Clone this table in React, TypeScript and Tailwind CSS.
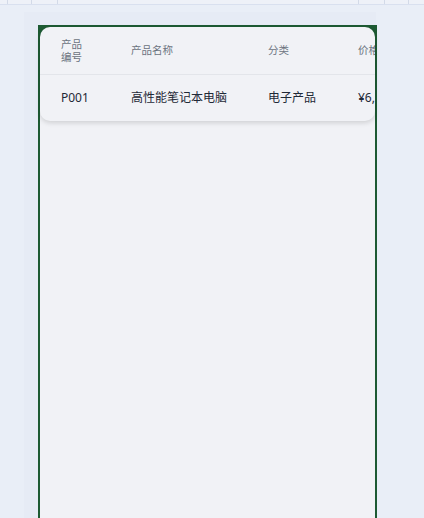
import React from "react";

const ticks = [7, 31, 57, 358, 384, 408];

export default function App() {
  return (
    <div
      className="w-[424px] h-[518px] overflow-hidden bg-[#e9eef7] flex flex-col"
      style={{ fontFamily: '"Noto Sans", "Noto Sans CJK SC", sans-serif' }}
    >
      <div className="relative h-[5px] shrink-0 bg-[#eef1f8] border-b border-[#d9e0ef]">
        {ticks.map((x) => (
          <div key={x} className="absolute top-0 h-[4px] w-px bg-[#d3dae8]" style={{ left: x }} />
        ))}
      </div>
      <div className="ml-[24px] mt-[7px] w-[352px] flex-1 bg-[#e6ebf5]">
        <div className="ml-[14px] mt-[13px] w-[339px] h-[500px] border-2 border-[#1d5a33] bg-[#f1f2f6]">
          <div className="bg-[linear-gradient(#1d5a33_50%,transparent_50%)]">
            <div className="rounded-[10px] overflow-hidden bg-[#f1f2f6] shadow-[0_2px_5px_rgba(0,0,0,0.14)]">
              <div className="w-[480px]">
                <div className="flex items-center h-[48px] border-b border-[#e3e5ea] text-[10.5px] leading-[13px] text-[#6b7280]">
                  <div className="w-[71px] shrink-0 pl-[21px] pr-[20px]">产品编号</div>
                  <div className="w-[137px] shrink-0 pl-[20px]">产品名称</div>
                  <div className="w-[90px] shrink-0 pl-[20px]">分类</div>
                  <div className="w-[120px] shrink-0 pl-[20px]">价格</div>
                </div>
                <div className="flex items-center h-[46px] text-[12px] text-[#1f2937]">
                  <div className="w-[71px] shrink-0 pl-[21px]">P001</div>
                  <div className="w-[137px] shrink-0 pl-[20px]">高性能笔记本电脑</div>
                  <div className="w-[90px] shrink-0 pl-[20px]">电子产品</div>
                  <div className="w-[120px] shrink-0 pl-[20px]">¥6,999.00</div>
                </div>
              </div>
            </div>
          </div>
        </div>
      </div>
    </div>
  );
}
